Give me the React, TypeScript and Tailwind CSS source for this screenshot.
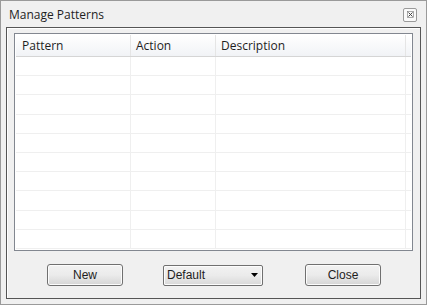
import React from "react";

const rows = Array.from({ length: 10 });

export default function App() {
  return (
    <div
      className="w-[427px] h-[305px] bg-[#f0f0f0] border border-[#9a9a9a] flex flex-col relative"
      style={{ fontFamily: "'Open Sans', 'Noto Sans', sans-serif" }}
    >
      <div className="h-[26px] flex items-center pl-[8px] pr-[8px] justify-between">
        <span className="text-[12px] text-[#1e1e1e] leading-none mt-[1px]">Manage Patterns</span>
        <div className="w-[14px] h-[14px] border border-[#9a9a9a] rounded-[2px] bg-[#fafafa] flex items-center justify-center mr-[1px] mt-[1px]">
          <svg width="7" height="7" viewBox="0 0 7 7">
            <path d="M1.5 1.5 L5.5 5.5 M5.5 1.5 L1.5 5.5" stroke="#444" strokeWidth="1" />
            <rect x="0.5" y="0.5" width="6" height="6" fill="none" stroke="#777" strokeWidth="0.6" />
          </svg>
        </div>
      </div>
      <div className="mx-[5px] mb-[5px] flex-1 border border-[#555] shadow-[inset_1px_1px_0_#fff] flex flex-col px-[7px] pt-[5px]">
        <div className="h-[218px] border border-[#828790] bg-white p-[1px]">
          <div className="h-full flex flex-col">
            <div className="h-[22px] flex text-[12px] text-[#1e1e1e] bg-gradient-to-b from-white to-[#f1f3f6] border-b border-[#d5d5d5]">
              <div className="w-[115px] pl-[6px] flex items-center border-r border-[#e5e5e5]">Pattern</div>
              <div className="w-[85px] pl-[5px] flex items-center border-r border-[#e5e5e5]">Action</div>
              <div className="w-[190px] pl-[5px] flex items-center border-r border-[#e5e5e5]">Description</div>
              <div className="flex-1" />
            </div>
            {rows.map((_, i) => (
              <div key={i} className="h-[19.2px] flex border-b border-[#efefef]">
                <div className="w-[115px] border-r border-[#efefef]" />
                <div className="w-[85px] border-r border-[#efefef]" />
                <div className="w-[190px] border-r border-[#efefef]" />
                <div className="flex-1" />
              </div>
            ))}
          </div>
        </div>
        <div className="flex items-center mt-[13px] text-[12px] text-[#1e1e1e]" style={{ fontFamily: "'Liberation Sans', Arial, sans-serif" }}>
          <button className="ml-[33px] w-[76px] h-[22px] rounded-[3px] border border-[#707070] bg-gradient-to-b from-[#f2f2f2] via-[#ebebeb] to-[#d5d5d5] shadow-[inset_0_0_0_1px_#fcfcfc] flex items-center justify-center">
            New
          </button>
          <div className="ml-[40px] w-[100px] h-[21px] rounded-[2px] border border-[#707070] bg-gradient-to-b from-[#f2f2f2] via-[#ebebeb] to-[#d8d8d8] shadow-[inset_0_0_0_1px_#fcfcfc] flex items-center justify-between pl-[3px] pr-[4px]">
            <span>Default</span>
            <svg width="7" height="4" viewBox="0 0 7 4">
              <path d="M0 0 L7 0 L3.5 4 Z" fill="#000" />
            </svg>
          </div>
          <button className="ml-[42px] w-[76px] h-[22px] rounded-[3px] border border-[#707070] bg-gradient-to-b from-[#f2f2f2] via-[#ebebeb] to-[#d5d5d5] shadow-[inset_0_0_0_1px_#fcfcfc] flex items-center justify-center">
            Close
          </button>
        </div>
      </div>
    </div>
  );
}
